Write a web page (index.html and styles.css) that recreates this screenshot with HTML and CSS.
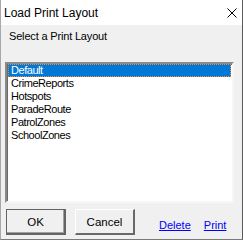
FILE: index.html
```html
<!DOCTYPE html>
<html>
<head>
<meta charset="utf-8">
<link rel="stylesheet" href="styles.css">
</head>
<body>
<div class="window">
  <div class="titlebar">
    <span class="title">Load Print Layout</span>
    <svg class="close" width="10" height="10" viewBox="0 0 10 10"><path d="M0.5 0.5 L9.5 9.5 M9.5 0.5 L0.5 9.5" stroke="#000" stroke-width="1" fill="none"/></svg>
  </div>
  <div class="content">
    <div class="label">Select a Print Layout</div>
    <div class="listbox">
      <div class="item selected">Default</div>
      <div class="item">CrimeReports</div>
      <div class="item">Hotspots</div>
      <div class="item">ParadeRoute</div>
      <div class="item">PatrolZones</div>
      <div class="item">SchoolZones</div>
    </div>
    <div class="footer">
      <button class="btn default">OK</button>
      <button class="btn">Cancel</button>
      <div class="links">
        <a class="link" href="#">Delete</a>
        <a class="link" href="#">Print</a>
      </div>
    </div>
  </div>
</div>
</body>
</html>
```
FILE: styles.css
```css
* { box-sizing: border-box; }
html, body { margin: 0; padding: 0; background: #f0f0f0; }
.window {
  width: 243px;
  height: 240px;
  border-left: 1px solid #a8a8a8;
  border-right: 1px solid #5a5a5a;
  border-bottom: 1px solid #7a7a7a;
  background: #f0f0f0;
  display: flex;
  flex-direction: column;
  font-family: "Liberation Sans", Arial, sans-serif;
}
.titlebar {
  height: 25px;
  background: #fff;
  display: flex;
  align-items: center;
  justify-content: space-between;
  padding: 0 5px 0 3px;
}
.title { font-size: 12px; color: #000; line-height: 14px; }
.close { display: block; }
.content {
  flex: 1;
  display: flex;
  flex-direction: column;
  padding: 5px 8px 0 4px;
}
.label {
  font-size: 11px;
  line-height: 13px;
  letter-spacing: -0.17px;
  padding-left: 4px;
  color: #000;
}
.listbox {
  margin-top: 19px;
  height: 141px;
  background: #fff;
  border-style: solid;
  border-width: 2px;
  border-color: #8a8a8a #f6f6f6 #f6f6f6 #8a8a8a;
  box-shadow: inset 1px 1px 0 #6a6a6a;
  padding: 0 1px;
}
.item {
  height: 13px;
  font-size: 11px;
  line-height: 11px;
  letter-spacing: -0.45px;
  padding: 0 0 0 2px;
  color: #000;
  border: 1px solid transparent;
  white-space: nowrap;
}
.item.selected {
  background: #0078d7;
  color: #fff;
  border: 1px dotted #ff8728;
}
.footer {
  display: flex;
  align-items: center;
  margin-top: 6px;
  padding-left: 1px;
  gap: 9px;
}
.btn {
  width: 60px;
  height: 26px;
  font-family: "Liberation Sans", Arial, sans-serif;
  font-size: 11.5px;
  color: #000;
  background: #f0f0f0;
  border-style: solid;
  border-width: 1px 2px 2px 1px;
  border-color: #fff #696969 #696969 #fff;
  padding: 0;
  margin: 0;
}
.btn.default {
  border-color: #646464;
  box-shadow: inset -1px -1px 0 #a0a0a0;
}
.links {
  display: flex;
  gap: 13px;
  margin-left: 15px;
  padding-top: 6px;
}
.link {
  font-size: 11px;
  color: #0000ff;
  text-decoration: underline;
}
```
